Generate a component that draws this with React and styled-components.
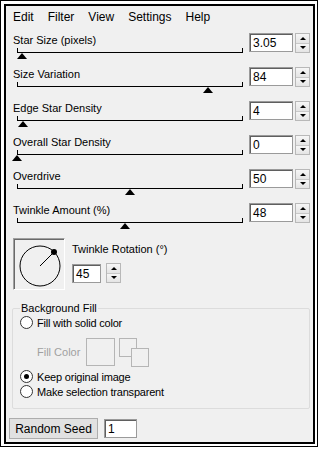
import styled, { createGlobalStyle } from "styled-components";

const GlobalStyle = createGlobalStyle`
  html, body {
    margin: 0;
    padding: 0;
    background: #ffffff;
  }
  body {
    font-family: "Liberation Sans", Arial, sans-serif;
    font-size: 11px;
    color: #000;
  }
`;

const Frame = styled.div`
  width: 318px;
  height: 447px;
  box-sizing: border-box;
  border: 1px solid #000;
  padding: 3px 2px 2px 3px;
  background: #fff;
`;

const Panel = styled.div`
  height: 100%;
  box-sizing: border-box;
  border: 2px solid #000;
  background: #f0f0f0;
  display: flex;
  flex-direction: column;
`;

const MenuBar = styled.div`
  height: 22px;
  display: flex;
  align-items: center;
  padding-left: 7px;
  gap: 14px;
  font-size: 12px;
`;

const MenuItem = styled.span`
  line-height: 14px;
`;

const Rows = styled.div`
  padding-top: 5px;
  display: flex;
  flex-direction: column;
`;

const Row = styled.div`
  height: 34px;
  display: grid;
  grid-template-columns: 1fr auto;
  grid-template-rows: 14px 20px;
  padding-right: 3px;
`;

const Label = styled.div`
  padding-left: ${(p) => (p.$flush ? 0 : 7)}px;
  line-height: 14px;
  white-space: nowrap;
`;

const TrackArea = styled.div`
  position: relative;
  margin: 0 6px 0 11px;
`;

const TrackLine = styled.div`
  margin-top: 1px;
  height: 4px;
  border: 1px solid #000;
  border-top: none;
`;

const Thumb = styled.div`
  position: absolute;
  top: 6px;
  width: 0;
  height: 0;
  margin-left: -5px;
  border-left: 5px solid transparent;
  border-right: 5px solid transparent;
  border-bottom: 6px solid #000;
`;

const Spin = styled.div`
  grid-column: 2;
  grid-row: 1 / span 2;
  display: flex;
  gap: 2px;
  align-items: flex-start;
`;

const NumberBox = styled.div`
  width: ${(p) => p.$w}px;
  height: 19px;
  box-sizing: border-box;
  background: #fff;
  border: 1px solid #9a9a9a;
  box-shadow: inset 1px 1px 0 #5f5f5f;
  padding: 1px 0 0 3px;
  font-size: 12px;
  line-height: 16px;
`;

const Spinner = styled.div`
  width: 15px;
  height: 20px;
  box-sizing: border-box;
  border: 1px solid #b8b8b8;
  display: flex;
  flex-direction: column;
  background: #f3f3f3;
`;

const SpinHalf = styled.div`
  flex: 1;
  display: flex;
  align-items: center;
  justify-content: center;
  background: linear-gradient(#f6f6f6, #e4e4e4);
  & + & {
    border-top: 1px solid #c8c8c8;
  }
`;

const Arrow = styled.div`
  width: 0;
  height: 0;
  border-left: 3px solid transparent;
  border-right: 3px solid transparent;
  ${(p) =>
    p.$up ? "border-bottom: 3px solid #000;" : "border-top: 3px solid #000;"}
`;

const Rotation = styled.div`
  margin-top: 1px;
  padding-left: 7px;
  display: flex;
  gap: 7px;
`;

const Dial = styled.div`
  width: 52px;
  height: 52px;
  box-sizing: border-box;
  border-top: 1px solid #a0a0a0;
  border-left: 1px solid #a0a0a0;
  border-right: 1px solid #fff;
  border-bottom: 1px solid #fff;
  box-shadow: inset 1px 1px 0 #6a6a6a;
`;

const RotationSide = styled.div`
  display: flex;
  flex-direction: column;
  padding-top: 4px;
  gap: 7px;
`;

const InlineSpin = styled.div`
  display: flex;
  gap: 5px;
  align-items: center;
`;

const Group = styled.fieldset`
  margin: 11px 3px 0 6px;
  padding: 0 0 9px 7px;
  border: 1px solid #dcdcdc;
  border-radius: 2px;
  display: flex;
  flex-direction: column;
`;

const Legend = styled.legend`
  padding: 0 1px;
  line-height: 14px;
`;

const RadioRow = styled.div`
  display: flex;
  align-items: center;
  gap: 4px;
  height: 15px;
  margin-top: ${(p) => p.$mt || 0}px;
  letter-spacing: -0.2px;
`;

const Radio = styled.span`
  width: 13px;
  height: 13px;
  box-sizing: border-box;
  border-radius: 50%;
  border: 1px solid #333;
  background: #fff;
  display: flex;
  align-items: center;
  justify-content: center;
  &::after {
    content: "";
    width: 5px;
    height: 5px;
    border-radius: 50%;
    background: ${(p) => (p.$on ? "#000" : "transparent")};
  }
`;

const FillRow = styled.div`
  display: flex;
  align-items: center;
  padding-left: 17px;
  margin-top: 8px;
  height: 28px;
`;

const Muted = styled.span`
  color: #a0a0a0;
  width: 49px;
`;

const Swatch = styled.div`
  width: 29px;
  height: 28px;
  box-sizing: border-box;
  border: 1px solid #b5b5b5;
  margin-right: 4px;
`;

const Footer = styled.div`
  margin-top: 9px;
  padding-left: 3px;
  display: flex;
  align-items: center;
  gap: 6px;
`;

const Button = styled.button`
  width: 89px;
  height: 21px;
  border: 1px solid #adadad;
  background: #e1e1e1;
  font-family: inherit;
  font-size: 12px;
  padding: 0;
  color: #000;
`;

const sliders = [
  { label: "Star Size (pixels)", value: "3.05", pos: 0.022 },
  { label: "Size Variation", value: "84", pos: 0.845 },
  { label: "Edge Star Density", value: "4", pos: 0.027 },
  { label: "Overall Star Density", value: "0", pos: 0 },
  { label: "Overdrive", value: "50", pos: 0.5 },
  { label: "Twinkle Amount (%)", value: "48", pos: 0.478 },
];

function Spinners() {
  return (
    <Spinner>
      <SpinHalf>
        <Arrow $up />
      </SpinHalf>
      <SpinHalf>
        <Arrow />
      </SpinHalf>
    </Spinner>
  );
}

export default function App() {
  return (
    <>
      <GlobalStyle />
      <Frame>
        <Panel>
          <MenuBar>
            <MenuItem>Edit</MenuItem>
            <MenuItem>Filter</MenuItem>
            <MenuItem>View</MenuItem>
            <MenuItem>Settings</MenuItem>
            <MenuItem>Help</MenuItem>
          </MenuBar>

          <Rows>
            {sliders.map((s) => (
              <Row key={s.label}>
                <Label>{s.label}</Label>
                <TrackArea>
                  <TrackLine />
                  <Thumb style={{ left: `${s.pos * 100}%` }} />
                </TrackArea>
                <Spin>
                  <NumberBox $w={44}>{s.value}</NumberBox>
                  <Spinners />
                </Spin>
              </Row>
            ))}
          </Rows>

          <Rotation>
            <Dial>
              <svg width="50" height="50" viewBox="0 0 50 50">
                <circle cx="26" cy="27" r="20" fill="none" stroke="#000" strokeWidth="1" />
                <line x1="26" y1="27" x2="40" y2="13" stroke="#000" strokeWidth="1" />
                <circle cx="40" cy="13" r="3" fill="#000" />
              </svg>
            </Dial>
            <RotationSide>
              <Label $flush>Twinkle Rotation (°)</Label>
              <InlineSpin>
                <NumberBox $w={29}>45</NumberBox>
                <Spinners />
              </InlineSpin>
            </RotationSide>
          </Rotation>

          <Group>
            <Legend>Background Fill</Legend>
            <RadioRow>
              <Radio />
              Fill with solid color
            </RadioRow>
            <FillRow>
              <Muted>Fill Color</Muted>
              <Swatch />
              <svg width="30" height="29" viewBox="0 0 30 29">
                <rect x="0.5" y="0.5" width="17" height="18" fill="none" stroke="#b5b5b5" />
                <rect x="12.5" y="10.5" width="17" height="18" fill="#f0f0f0" stroke="#b5b5b5" />
              </svg>
            </FillRow>
            <RadioRow $mt={3}>
              <Radio $on />
              Keep original image
            </RadioRow>
            <RadioRow>
              <Radio />
              Make selection transparent
            </RadioRow>
          </Group>

          <Footer>
            <Button>Random Seed</Button>
            <NumberBox $w={33}>1</NumberBox>
          </Footer>
        </Panel>
      </Frame>
    </>
  );
}
